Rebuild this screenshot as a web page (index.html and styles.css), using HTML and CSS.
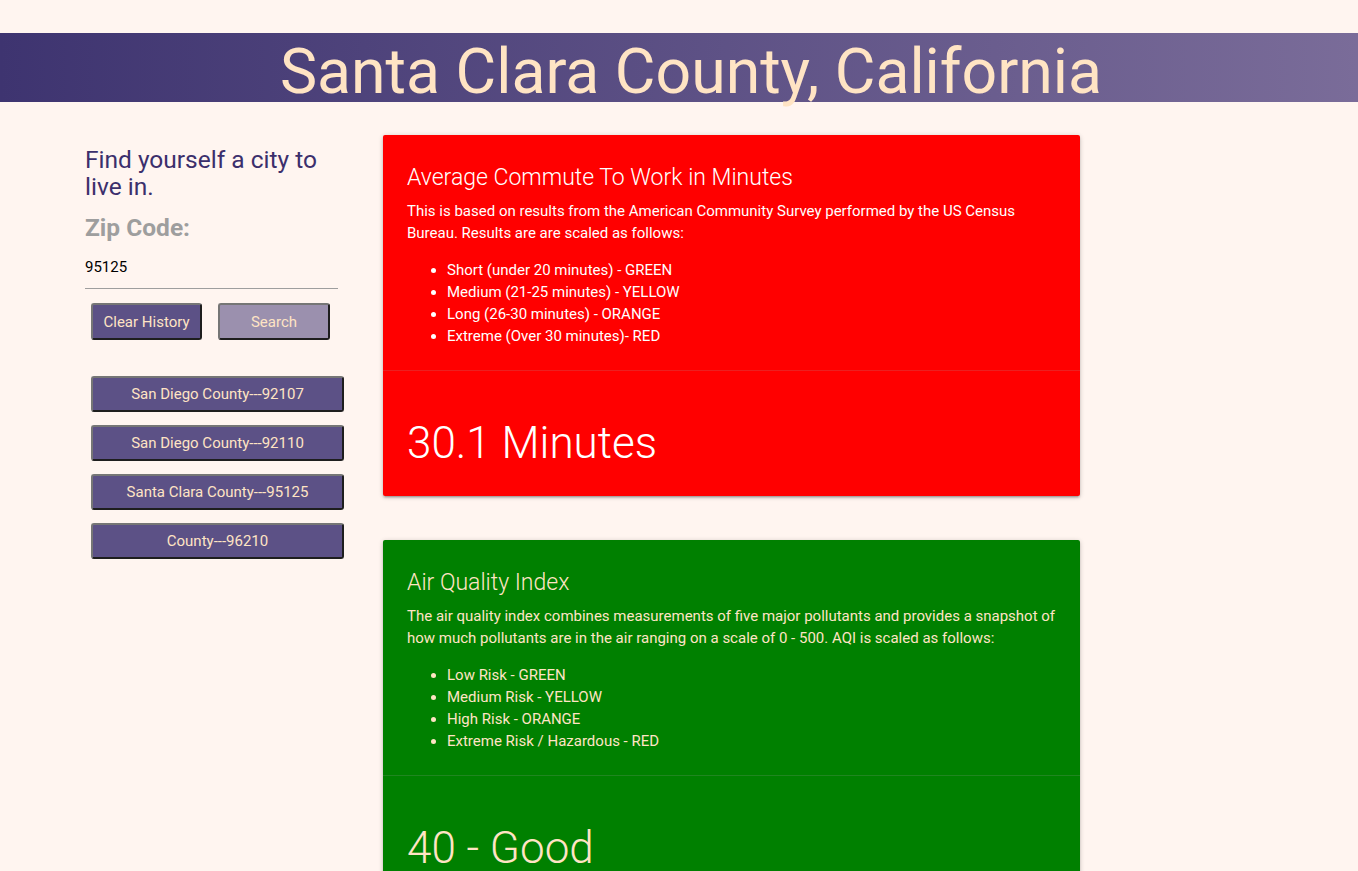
FILE: index.html
```html
<!DOCTYPE html>
<html lang="en">
<head>
<meta charset="utf-8">
<title>Santa Clara County, California</title>
<link rel="stylesheet" href="styles.css">
</head>
<body>
<header class="banner">
  <h1 class="banner-title">Santa Clara County, California</h1>
</header>
<main class="layout">
  <aside class="sidebar">
    <h5 class="tagline">Find yourself a city to live in.</h5>
    <h5 class="zip-label">Zip Code:</h5>
    <div class="zip-field">95125</div>
    <div class="actions">
      <button class="btn btn-dark">Clear History</button>
      <button class="btn btn-light">Search</button>
    </div>
    <div class="history">
      <button class="btn btn-dark btn-wide">San Diego County---92107</button>
      <button class="btn btn-dark btn-wide">San Diego County---92110</button>
      <button class="btn btn-dark btn-wide">Santa Clara County---95125</button>
      <button class="btn btn-dark btn-wide">County---96210</button>
    </div>
  </aside>
  <section class="cards">
    <article class="card card-red">
      <div class="card-content">
        <span class="card-title">Average Commute To Work in Minutes</span>
        <p>This is based on results from the American Community Survey performed by the US Census Bureau. Results are are scaled as follows:</p>
        <ul class="scale">
          <li>Short (under 20 minutes) - GREEN</li>
          <li>Medium (21-25 minutes) - YELLOW</li>
          <li>Long (26-30 minutes) - ORANGE</li>
          <li>Extreme (Over 30 minutes)- RED</li>
        </ul>
      </div>
      <div class="card-action">
        <h3 class="value">30.1 Minutes</h3>
      </div>
    </article>
    <article class="card card-green">
      <div class="card-content">
        <span class="card-title">Air Quality Index</span>
        <p>The air quality index combines measurements of five major pollutants and provides a snapshot of how much pollutants are in the air ranging on a scale of 0 - 500. AQI is scaled as follows:</p>
        <ul class="scale">
          <li>Low Risk - GREEN</li>
          <li>Medium Risk - YELLOW</li>
          <li>High Risk - ORANGE</li>
          <li>Extreme Risk / Hazardous - RED</li>
        </ul>
      </div>
      <div class="card-action">
        <h3 class="value">40 - Good</h3>
      </div>
    </article>
  </section>
</main>
</body>
</html>
```

FILE: styles.css
```css
* { box-sizing: border-box; }

html, body {
  margin: 0;
  padding: 0;
}

body {
  background: #fff5f0;
  font-family: Roboto, "Open Sans", sans-serif;
  font-size: 15px;
  line-height: 1.5;
  color: rgba(0,0,0,0.87);
}

.banner {
  margin-top: 33px;
  height: 69px;
  background: linear-gradient(to right, #3e3470, #7a6c99);
  display: flex;
  justify-content: center;
}

.banner-title {
  margin: 0 0 0 24px;
  font-size: 62.5px;
  font-weight: 400;
  line-height: 69px;
  padding-top: 4px;
  height: 69px;
  color: #ffe4c4;
  white-space: nowrap;
}

.layout {
  display: flex;
  padding-left: 85px;
  padding-top: 33px;
}

.sidebar {
  width: 298px;
  flex: none;
  padding-top: 11px;
}

.tagline {
  margin: 0;
  width: 240px;
  font-size: 24.5px;
  font-weight: 400;
  line-height: 27px;
  color: #3b2f6c;
}

.zip-label {
  margin: 13px 0 0;
  font-size: 24.5px;
  font-weight: 700;
  line-height: 30px;
  color: #9e9e9e;
}

.zip-field {
  width: 253px;
  margin-top: 12px;
  height: 34px;
  padding-top: 0;
  font-size: 15px;
  line-height: 24px;
  color: #000;
  border-bottom: 1px solid #9e9e9e;
}

.actions {
  display: flex;
  gap: 16px;
  margin-top: 14px;
  padding-left: 6px;
}

.btn {
  font-family: inherit;
  font-size: 15px;
  color: #ffe4c4;
  height: 37px;
  padding: 0 4px;
  white-space: nowrap;
  border-width: 2px;
  border-style: solid;
  border-color: #767676 #1e1e1e #1e1e1e #767676;
  border-radius: 3px;
  cursor: pointer;
}

.btn-dark { background: #5c5186; width: 111px; }
.btn-light { background: #9b90ae; width: 112px; }

.history {
  display: flex;
  flex-direction: column;
  gap: 13px;
  margin-top: 36px;
  padding-left: 6px;
}

.btn-wide {
  width: 253px;
  height: 36px;
}

.cards {
  width: 697px;
  flex: none;
  display: flex;
  flex-direction: column;
  gap: 44px;
}

.card {
  border-radius: 2px;
  box-shadow: 0 2px 2px 0 rgba(0,0,0,0.14), 0 3px 1px -2px rgba(0,0,0,0.12), 0 1px 5px 0 rgba(0,0,0,0.2);
}

.card-red { background: #ff0000; color: #ffffff; }
.card-green { background: #008000; color: #ffe4c4; }

.card-content {
  padding: 27px 24px 23px;
}

.card-title {
  display: block;
  font-size: 23px;
  font-weight: 300;
  line-height: 32px;
  margin-bottom: 6px;
}

.card-content p {
  margin: 0;
  font-size: 15px;
  line-height: 22px;
}

.scale {
  margin: 15px 0 0;
  padding-left: 40px;
  font-size: 15px;
  line-height: 22px;
}

.card-action {
  border-top: 1px solid rgba(160,160,160,0.2);
  padding: 16px 24px;
}

.value {
  margin: 26px 0 7px;
  font-size: 44px;
  font-weight: 300;
  line-height: 60px;
}
```
